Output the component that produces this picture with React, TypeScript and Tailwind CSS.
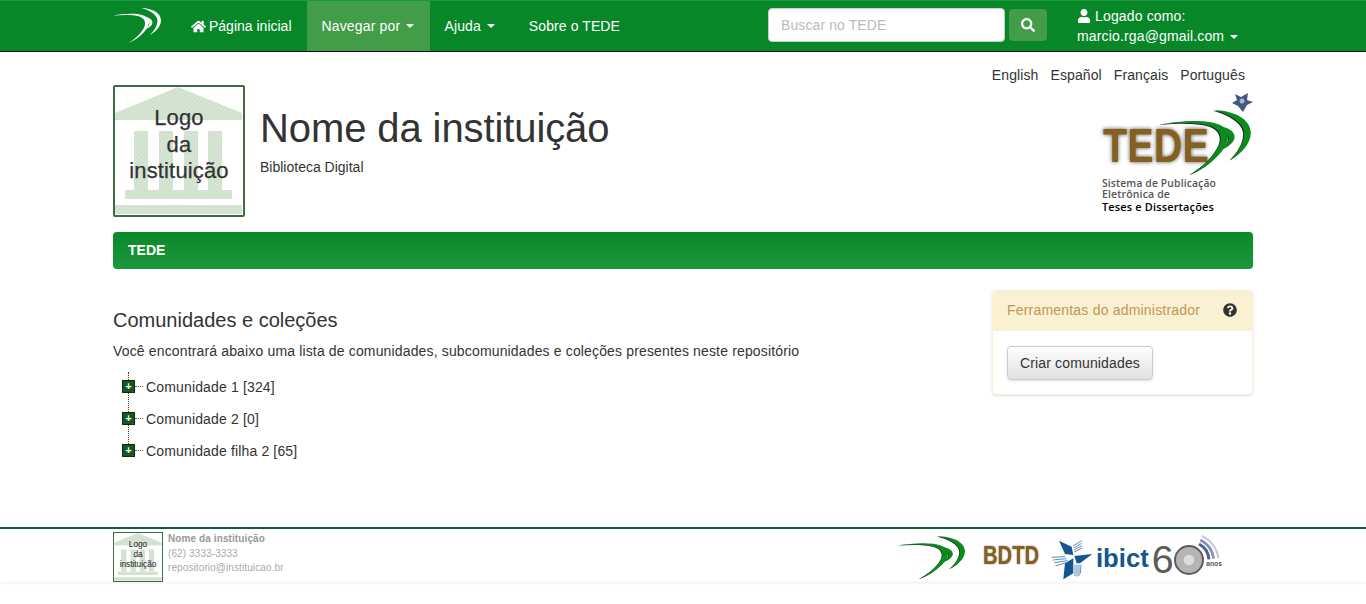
import { FaHome, FaQuestionCircle, FaSearch, FaUser } from "react-icons/fa";

const FONT = "'Liberation Sans', Arial, sans-serif";

const Caret = () => (
  <span className="ml-[6px] inline-block align-middle w-0 h-0 border-x-[4px] border-x-transparent border-t-[4px] border-t-white"></span>
);

// the three arcs of the TEDE mark, in the coordinates of a 272x195 box
const SwooshPaths = ({ color }: { color: string }) => (
  <g fill={color}>
    <path d="M30 103 C90 92 170 86 210 105 C245 122 240 160 205 195 C180 222 150 242 118 255 C150 235 178 212 196 185 C222 150 215 120 180 108 C140 96 80 98 30 103Z" />
    <path d="M190 105 C225 108 258 122 253 145 C250 158 235 170 215 178 C232 165 240 150 235 138 C228 122 210 112 190 105Z" />
    <path d="M190 60 C250 62 300 85 302 128 C302 160 275 190 240 210 C262 188 282 160 282 130 C282 100 240 72 190 60Z" />
  </g>
);

const Swoosh = ({ shadow, color, className }: { shadow?: boolean; color: string; className: string }) => (
  <svg viewBox="30 60 272 195" preserveAspectRatio="none" className={className}>
    {shadow && (
      <g transform="translate(-3 2)">
        <SwooshPaths color="#222" />
      </g>
    )}
    <SwooshPaths color={color} />
  </svg>
);

const InstitutionLogo = ({ className, border }: { className: string; border: string }) => (
  <div className={`${className} ${border} border-[#3d6b45] bg-white shrink-0`}>
    <svg viewBox="0 0 128 128" className="w-full h-full block">
      <defs>
        <pattern id="hatch" width="3" height="3" patternUnits="userSpaceOnUse" patternTransform="rotate(45)">
          <rect width="3" height="3" fill="#cfe0cd" />
          <rect width="1" height="3" fill="#dbe8d8" />
        </pattern>
      </defs>
      <g fill="url(#hatch)">
        <path d="M63 0 L127 26 L127 33 L0 33 L0 26Z" />
        <rect x="19" y="44" width="14" height="59" />
        <rect x="44" y="44" width="14" height="59" />
        <rect x="69" y="44" width="14" height="59" />
        <rect x="93" y="44" width="14" height="59" />
        <rect x="10" y="103" width="107" height="9" />
        <rect x="0" y="118" width="127" height="9" />
      </g>
      <g fill="#333" stroke="#333" strokeWidth="0.25" fontFamily={FONT} fontSize="22" textAnchor="middle">
        <text x="64" y="38">Logo</text>
        <text x="64" y="65">da</text>
        <text x="64" y="91">instituição</text>
      </g>
    </svg>
  </div>
);

const TedeLogo = () => (
  <svg viewBox="0 0 153 126" className="w-[153px] h-[126px] shrink-0">
    <path d="M135 4 L141 7 L148 3 L147 10 L153 12 L147 15 L143 22 L138 16 L132 13 L137 10Z" fill="#3f5a85" />
    <circle cx="142" cy="11" r="2.5" fill="#aab4cc" />
    <text
      x="3"
      y="72"
      fontFamily={FONT}
      fontWeight="bold"
      fontSize="48"
      textLength="106"
      lengthAdjust="spacingAndGlyphs"
      fill="#85601f"
      className="drop-shadow-[0_0_2px_#555]"
    >
      TEDE
    </text>
    <svg x="60" y="20" width="91" height="65" viewBox="30 60 272 195">
      <g transform="translate(-3 2)">
        <SwooshPaths color="#222" />
      </g>
      <SwooshPaths color="#0a8c1c" />
    </svg>
    <g fontFamily="'Open Sans', sans-serif" fontWeight="600" fontSize="11">
      <text x="2" y="97" textLength="114" lengthAdjust="spacingAndGlyphs" fill="#555">
        Sistema de Publicação
      </text>
      <text x="2" y="108" textLength="68" lengthAdjust="spacingAndGlyphs" fill="#555">
        Eletrônica de
      </text>
      <text x="2" y="121" textLength="112" lengthAdjust="spacingAndGlyphs" fill="#000">
        Teses e Dissertações
      </text>
    </g>
  </svg>
);

const BdtdLogo = () => (
  <div className="w-[58px] ml-[18px] mt-[10px] shrink-0">
    <span className="inline-block origin-left scale-x-[0.81] text-[25px] leading-[30px] font-bold text-[#85601f] [text-shadow:0_0_2px_#777]">
      BDTD
    </span>
  </div>
);

const IbictLogo = () => (
  <svg viewBox="0 0 540 156" className="w-[180px] h-[52px] ml-[4px] shrink-0">
    <g fill="#14568f">
      <path d="M42 32 L80 50 L85 75 L60 72Z" />
      <path d="M88 78 L142 72 L105 100 L95 100Z" />
      <path d="M60 100 L85 85 L85 130 L55 148Z" />
    </g>
    <g stroke="#5b8fbd" strokeWidth="3" fill="none">
      <path d="M84 48 L110 32 M86 54 L110 40 M87 60 L111 47 M88 66 L112 54" />
      <path d="M20 82 L60 80 M24 90 L64 86 M28 98 L68 92 M32 108 L64 98" />
      <path d="M90 104 L90 138 M96 104 L96 140 M102 104 L102 138 M108 104 L106 130" />
    </g>
    <text x="153" y="112" fontFamily={FONT} fontWeight="bold" fontSize="78" textLength="158" lengthAdjust="spacingAndGlyphs" fill="#14568f">
      ibict
    </text>
    <text x="320" y="130" fontFamily={FONT} fontSize="118" fill="#5c5c5c">
      6
    </text>
    <g fill="none">
      <path d="M462 42 A58 58 0 0 1 492 88" stroke="#4d5f94" strokeWidth="9" />
      <path d="M466 30 A72 72 0 0 1 506 86" stroke="#8391b5" strokeWidth="8" />
      <path d="M470 18 A86 86 0 0 1 520 84" stroke="#c4cbdc" strokeWidth="7" />
      <circle cx="432" cy="90" r="42" stroke="#5c5c5c" strokeWidth="6" fill="#b5b5b5" />
      <circle cx="432" cy="90" r="16" fill="#dcdcdc" />
    </g>
    <text x="484" y="108" fontFamily={FONT} fontWeight="bold" fontSize="20" fill="#555">
      anos
    </text>
  </svg>
);

const TreeRow = ({ label }: { label: string }) => (
  <div className="h-8 flex items-center">
    <span className="-mt-[1px] w-[13px] h-[13px] bg-[#0d5c1f] border border-[#222] flex items-center justify-center text-white text-[11px] leading-none font-bold">
      +
    </span>
    <span className="-mt-[1px] w-[8px] border-t border-dotted border-[#555] mr-[3px]"></span>
    <span>{label}</span>
  </div>
);

const App = () => {
  return (
    <div className="min-h-[604px] bg-white text-[14px] leading-[20px] text-[#333] font-['Liberation_Sans',Arial,sans-serif]">
      <nav className="h-[52px] bg-[#088729] border-t border-t-[#1a9a3c] border-b border-b-[#0a0a0a] text-white">
        <div className="w-[1140px] mx-auto flex h-[50px] tracking-[0.1px]">
          <Swoosh color="#ffffff" className="w-[48px] h-[35px] mt-[7px] mr-[30px]" />
          <a className="flex items-center pr-[15px] tracking-normal">
            <FaHome className="mr-[3px] text-[15px]" />
            Página inicial
          </a>
          <a className="flex items-center w-[123px] pl-[15px] bg-[#439c47] tracking-[0.15px]">
            Navegar por <Caret />
          </a>
          <a className="flex items-center px-[15px]">
            Ajuda <Caret />
          </a>
          <a className="flex items-center px-[19px]">Sobre o TEDE</a>
          <div className="ml-[129px] flex items-center gap-[4px] pb-[2px]">
            <input
              placeholder="Buscar no TEDE"
              className="w-[237px] h-[34px] rounded-[4px] bg-white border border-[#ccc] px-[12px] text-[#555] placeholder:text-[#bbb] shadow-inner"
            />
            <button className="w-[38px] h-[32px] rounded-[4px] bg-[#439c47] flex items-center justify-center">
              <FaSearch className="text-[14px]" />
            </button>
          </div>
          <div className="ml-[30px] pt-[5px] leading-[20px] tracking-[0.15px]">
            <div className="flex items-center">
              <FaUser className="mr-[4px] text-[14px]" />
              Logado como:
            </div>
            <div>
              marcio.rga@gmail.com
              <Caret />
            </div>
          </div>
        </div>
      </nav>

      <div className="w-[1140px] mx-auto tracking-[0.15px]">
        <div className="flex justify-end gap-[12px] pr-[8px] pt-[13px] h-[33px] tracking-[0.1px]">
          <a>English</a>
          <a>Español</a>
          <a>Français</a>
          <a>Português</a>
        </div>
        <div className="flex h-[147px]">
          <InstitutionLogo className="w-[132px] h-[132px] rounded-[2px]" border="border-2" />
          <div className="ml-[15px] grow tracking-normal">
            <h1 className="text-[40px] leading-[46px] mt-[20px] tracking-[-0.1px]">Nome da instituição</h1>
            <p className="mt-[6px]">Biblioteca Digital</p>
          </div>
          <div className="mt-[5px] ml-auto">
            <TedeLogo />
          </div>
        </div>
        <div className="h-[37px] rounded-[4px] bg-gradient-to-b from-[#0a8829] to-[#1b983c] text-white font-bold flex items-center px-[15px] pb-[2px] tracking-normal">
          TEDE
        </div>

        <div className="flex mt-[21px] h-[237px]">
          <div className="grow">
            <h2 className="text-[20px] leading-[22px] mt-[19px] tracking-normal">Comunidades e coleções</h2>
            <p className="mt-[10px]">Você encontrará abaixo uma lista de comunidades, subcomunidades e coleções presentes neste repositório</p>
            <div className="relative mt-[10px] ml-[9px]">
              <span className="absolute left-[6px] top-[1px] h-[78px] border-l border-dotted border-[#333]"></span>
              <div className="relative">
                <TreeRow label="Comunidade 1 [324]" />
                <TreeRow label="Comunidade 2 [0]" />
                <TreeRow label="Comunidade filha 2 [65]" />
              </div>
            </div>
          </div>
          <div className="w-[261px] h-[105px] rounded-[4px] border border-[#fbeed5] shadow-sm overflow-hidden shrink-0">
            <div className="h-[40px] bg-[#faf0d2] text-[#c09853] flex items-center justify-between pl-[14px] pr-[15px] pb-[2px] tracking-[0.2px]">
              <span>Ferramentas do administrador</span>
              <FaQuestionCircle className="text-[#333] text-[14px]" />
            </div>
            <div className="px-[14px] pt-[15px]">
              <button className="h-[34px] w-[146px] rounded-[4px] border border-[#ccc] bg-gradient-to-b from-white to-[#e0e0e0] shadow-sm">
                Criar comunidades
              </button>
            </div>
          </div>
        </div>
      </div>

      <footer className="h-[55px] border-t-2 border-t-[#0f6035] bg-white shadow-[0_1px_3px_rgba(0,0,0,0.08)]">
        <div className="w-[1140px] mx-auto flex justify-between">
          <div className="flex pt-[3px]">
            <InstitutionLogo className="w-[50px] h-[50px]" border="border" />
            <div className="ml-[5px] text-[10px] leading-[14.5px] text-[#aaa] tracking-[0.1px]">
              <div className="font-bold text-[#999]">Nome da instituição</div>
              <div>(62) 3333-3333</div>
              <div>repositorio@instituicao.br</div>
            </div>
          </div>
          <div className="flex items-start mr-[28px] pt-[1px]">
            <Swoosh shadow color="#0a8c1c" className="w-[68px] h-[43px] mt-[6px] shrink-0" />
            <BdtdLogo />
            <IbictLogo />
          </div>
        </div>
      </footer>
    </div>
  );
};

export default App;
